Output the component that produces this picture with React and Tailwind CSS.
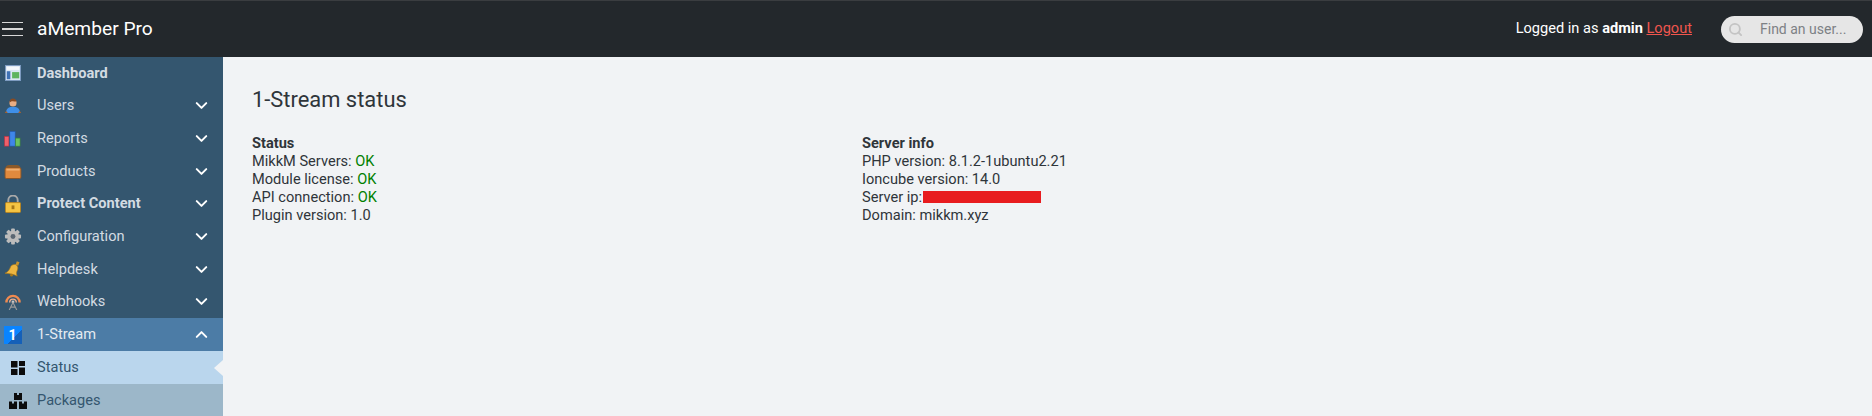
import React from 'react';
import { ChevronDown, ChevronUp, Search } from 'lucide-react';

/* ─── Sidebar icons ────────────────────────────────────────── */
const DashboardIcon = () => (
  <svg width="16" height="16" viewBox="0 0 18 18">
    <rect x="0.5" y="0.5" width="17" height="17" fill="#dbe7f3" stroke="#7b9ac2" />
    <rect x="2" y="2" width="14" height="3.500" fill="#f4f8fc" />
    <rect x="2" y="7" width="4" height="9" fill="#3f72b5" />
    <rect x="8" y="8" width="8" height="7" fill="#5fb45f" />
  </svg>
);

const UsersIcon = () => (
  <svg width="16" height="16" viewBox="0 0 18 18">
    <path d="M1 17c0-4 2-6 5-7h6c3 1 5 3 5 7z" fill="#3f8fe8" />
    <path d="M0 17c0-1 1-2 2-2l1 2zM18 17c0-1-1-2-2-2l-1 2z" fill="#a9622c" />
    <circle cx="9" cy="5.5" r="4" fill="#e8ad84" />
    <path d="M5 5c0-3 2-4.500 4-4.500S13 2 13 4c-2 0-5-1-6 0z" fill="#8a4a20" />
  </svg>
);

const ReportsIcon = () => (
  <svg width="19" height="16" viewBox="0 0 19 18">
    <rect x="0.500" y="6" width="5" height="11" fill="#f0606a" stroke="#b53040" strokeWidth="0.7" />
    <rect x="6.500" y="0.500" width="6" height="16.500" fill="#3f86e8" stroke="#2456a8" strokeWidth="0.7" />
    <rect x="13" y="8" width="5" height="9" fill="#6cc060" stroke="#3a8a3a" strokeWidth="0.7" />
  </svg>
);

const ProductsIcon = () => (
  <svg width="18" height="15" viewBox="0 0 18 16">
    <path d="M1 5c0-3 2-4 4-4h8c2 0 4 1 4 4z" fill="#8a5a2a" />
    <rect x="0.500" y="4" width="17" height="11.500" rx="1.500" fill="#e08a3e" stroke="#8a5426" />
    <rect x="2" y="5" width="14" height="2" fill="#f0b070" />
  </svg>
);

const LockIcon = () => (
  <svg width="16" height="18" viewBox="0 0 17 19">
    <path d="M3.500 9V5.500a5 5 0 0 1 10 0V9" fill="none" stroke="#a9a9a9" strokeWidth="2" />
    <rect x="0.500" y="8" width="16" height="10.500" rx="1" fill="#f5c544" stroke="#b98420" />
    <rect x="7" y="11" width="3" height="4" fill="#a87818" />
  </svg>
);

const GearIcon = () => (
  <svg width="18" height="17" viewBox="0 0 18 18">
    <g fill="#bcbcbc">
      <circle cx="9" cy="9" r="6.200" />
      <rect x="7" y="0.500" width="4" height="17" rx="1" />
      <rect x="7" y="0.500" width="4" height="17" rx="1" transform="rotate(45 9 9)" />
      <rect x="7" y="0.500" width="4" height="17" rx="1" transform="rotate(90 9 9)" />
      <rect x="7" y="0.500" width="4" height="17" rx="1" transform="rotate(135 9 9)" />
    </g>
    <circle cx="9" cy="9" r="2.600" fill="#5a6672" />
  </svg>
);

const BellIcon = () => (
  <svg width="17" height="17" viewBox="0 0 18 18">
    <path d="M1 13c3-1 5-4 6-7 1-2 4-3 6-2 2 2 2 4 1 6-1 2-1 4 0 6-4-2-9-3-13-3z" fill="#eeb640" stroke="#a87818" strokeWidth="0.7" />
    <rect x="13" y="0.500" width="3" height="4" fill="#c8922c" transform="rotate(20 14 2)" />
    <circle cx="8" cy="15" r="1.500" fill="#a87818" />
  </svg>
);

const WebhooksIcon = () => (
  <svg width="18" height="17" viewBox="0 0 18 18" fill="none">
    <path d="M2 10a7 7 0 0 1 14 0" stroke="#f08a50" strokeWidth="2.500" />
    <path d="M5.500 10a3.500 3.500 0 0 1 7 0" stroke="#f0b090" strokeWidth="1.500" />
    <circle cx="9" cy="9.500" r="1.500" fill="#c8c8c8" />
    <path d="M9 10l-4 8M9 10l4 8M6.500 15h5" stroke="#9a9a9a" strokeWidth="1.200" />
  </svg>
);

const StreamIcon = () => (
  <div className="w-[18px] h-[18px] bg-[linear-gradient(135deg,#0a84ff_60%,#1560b8_60%)] flex items-center justify-center text-white text-[14px] font-bold leading-none">1</div>
);

const StatusIcon = () => (
  <svg width="14" height="14" viewBox="0 0 14 14" fill="#0c0c0c">
    <rect x="0" y="0" width="6.500" height="6.500" />
    <rect x="8" y="0" width="6" height="5" />
    <rect x="0" y="8" width="6.500" height="6" />
    <rect x="8" y="6.500" width="6" height="7.500" />
  </svg>
);

const PackagesIcon = () => (
  <svg width="18" height="16" viewBox="0 0 18 16" fill="#0c0c0c">
    <path d="M5 0h8v7H5zM8 0v2h2V0z" fillRule="evenodd" />
    <path d="M0 8.500h8V16H0zM3 8.500v2h2v-2z" fillRule="evenodd" />
    <path d="M10 8.500h8V16h-8zM13 8.500v2h2v-2z" fillRule="evenodd" />
  </svg>
);

const menu = [
  { label: 'Dashboard', icon: DashboardIcon, bold: true },
  { label: 'Users', icon: UsersIcon, arrow: true },
  { label: 'Reports', icon: ReportsIcon, arrow: true },
  { label: 'Products', icon: ProductsIcon, arrow: true },
  { label: 'Protect Content', icon: LockIcon, arrow: true, bold: true },
  { label: 'Configuration', icon: GearIcon, arrow: true },
  { label: 'Helpdesk', icon: BellIcon, arrow: true },
  { label: 'Webhooks', icon: WebhooksIcon, arrow: true },
];

/* ─── Sidebar ──────────────────────────────────────────────── */
const Sidebar = () => (
  <aside className="w-[223px] shrink-0 bg-[#34566f] overflow-hidden">
    {menu.map(({ label, icon: Icon, arrow, bold }) => (
      <div key={label} className="h-[32.625px] flex items-center text-[#d3dbe2]">
        <div className="w-[25px] mr-[12px] flex justify-center"><Icon /></div>
        <span className={`text-[14.600px] pt-[1px] ${bold ? 'font-bold' : ''}`}>{label}</span>
        {arrow && <ChevronDown className="ml-auto mr-[12px] w-[19px] h-[19px] text-white" strokeWidth={2.500} />}
      </div>
    ))}
    <div className="h-[33px] flex items-center bg-[#4c7ca6] text-[#e4ebf1]">
      <div className="w-[25px] mr-[12px] flex justify-center"><StreamIcon /></div>
      <span className="text-[14.600px]">1-Stream</span>
      <ChevronUp className="ml-auto mr-[12px] w-[19px] h-[19px] text-white" strokeWidth={2.500} />
    </div>
    <div className="relative h-[33px] flex items-center bg-[#bad6ed] text-[#34566f]">
      <div className="w-[36px] mr-[1px] flex justify-center"><StatusIcon /></div>
      <span className="text-[14.600px]">Status</span>
      <div className="absolute right-0 top-[9px] border-y-[8px] border-r-[9px] border-y-transparent border-r-[#f1f3f5]" />
    </div>
    <div className="h-[33px] flex items-center bg-[#9cb7c9] text-[#34566f]">
      <div className="w-[36px] mr-[1px] flex justify-center"><PackagesIcon /></div>
      <span className="text-[14.600px]">Packages</span>
    </div>
  </aside>
);

/* ─── Header ───────────────────────────────────────────────── */
const Header = () => (
  <header className="h-[57px] shrink-0 bg-[#23282c] border-t border-[#3a3d40] flex items-center text-white">
    <div className="w-[21px] ml-[2px] flex flex-col gap-[5px]">
      <div className="h-[1.500px] bg-[#d8d8d8]" />
      <div className="h-[1.500px] bg-[#d8d8d8]" />
      <div className="h-[1.500px] bg-[#d8d8d8]" />
    </div>
    <div className="ml-[14px] text-[19.200px]">aMember Pro</div>
    <div className="ml-auto text-[14.600px]">
      Logged in as <b>admin</b> <a className="text-[#f0564e] underline">Logout</a>
    </div>
    <div className="ml-[29px] mr-[9px] w-[142px] h-[27px] rounded-full bg-[#e6e6e6] flex items-center">
      <Search className="ml-[7px] w-[15px] h-[15px] text-[#c4c4c4]" strokeWidth={3} />
      <span className="ml-[17px] text-[14px] text-[#7d8185]">Find an user...</span>
    </div>
  </header>
);

/* ─── Main ─────────────────────────────────────────────────── */
const Ok = () => <span className="text-[#008000]">OK</span>;

const Main = () => (
  <main className="flex-1 bg-[#f1f3f5] pl-[29px] pt-[30px] text-[#2f353a] text-[14.600px] leading-[18px]">
    <h1 className="text-[21.900px] leading-[26px] mb-[21px]">1-Stream status</h1>
    <div className="grid grid-cols-[610px_1fr]">
      <div>
        <div className="font-bold">Status</div>
        <div>MikkM Servers: <Ok /></div>
        <div>Module license: <Ok /></div>
        <div>API connection: <Ok /></div>
        <div>Plugin version: 1.0</div>
      </div>
      <div>
        <div className="font-bold">Server info</div>
        <div>PHP version: 8.1.2-1ubuntu2.21</div>
        <div>Ioncube version: 14.0</div>
        <div className="flex items-center">Server ip:<span className="inline-block ml-[1px] w-[118px] h-[12px] bg-[#e81c1f]" /></div>
        <div>Domain: mikkm.xyz</div>
      </div>
    </div>
  </main>
);

const App = () => (
  <div className="h-[416px] flex flex-col overflow-hidden font-['Roboto',sans-serif]">
    <Header />
    <div className="flex flex-1 min-h-0">
      <Sidebar />
      <Main />
    </div>
  </div>
);

export default App;
